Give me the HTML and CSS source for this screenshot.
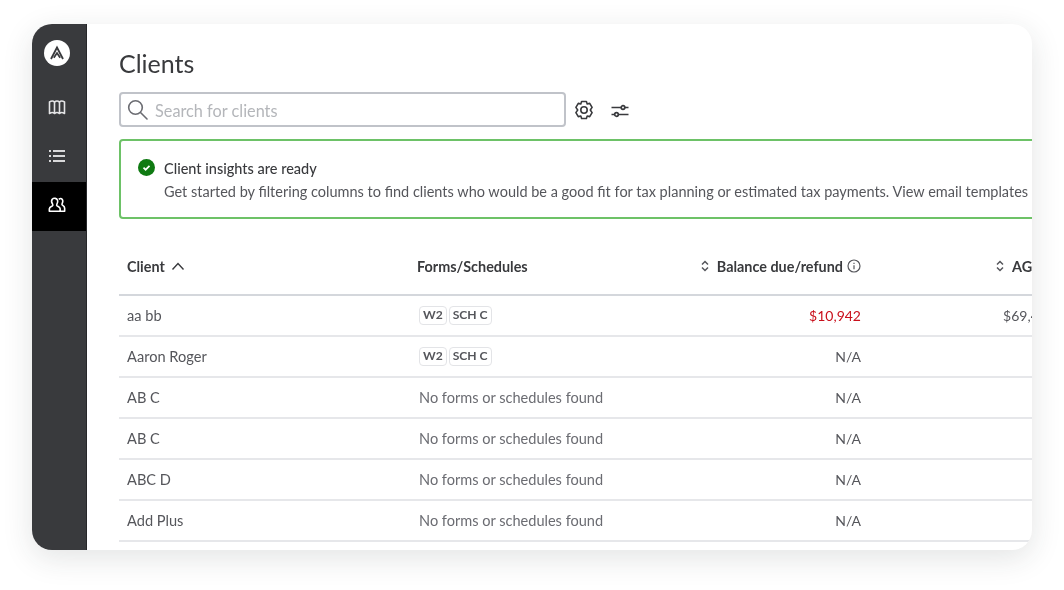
FILE: index.html
```html
<!DOCTYPE html>
<html lang="en">
<head>
<meta charset="utf-8">
<title>Clients</title>
<link rel="stylesheet" href="styles.css">
</head>
<body>
<div class="card">
  <nav class="sidebar">
    <div class="logo-wrap">
      <span class="logo">
        <svg width="18" height="18" viewBox="0 0 18 18" fill="none" stroke="#393a3d" stroke-width="1.800"><path d="M3 15 9 3.500 15 15"/><path d="M5.800 13.800 9 9l3.200 4.800"/></svg>
      </span>
    </div>
    <a class="nav-item">
      <svg width="18" height="18" viewBox="0 0 18 18" fill="none" stroke="#e4e4e6" stroke-width="1.600" stroke-linejoin="round"><path d="M1.500 4c2-1.300 3.700-1.300 5 0 1.300-1 3.700-1 5 0 1.300-1.300 3-1.300 5 0v11.500c-2-1.300-3.700-1.300-5 0-1.300-1-3.700-1-5 0-1.300-1.300-3-1.300-5 0z"/><path d="M6.500 4v11.500M11.500 4v11.500"/></svg>
    </a>
    <a class="nav-item">
      <svg width="18" height="18" viewBox="0 0 18 18" fill="none" stroke="#d8d8da" stroke-width="2"><path d="M5 4h12M5 9h12M5 14h12"/><path d="M1 4h2M1 9h2M1 14h2" stroke-width="1.800"/></svg>
    </a>
    <a class="nav-item is-active">
      <svg width="18" height="18" viewBox="0 0 20 20" fill="none" stroke="#fff" stroke-width="1.800" stroke-linejoin="round"><path d="M12 3.800c1-1 2-1.300 3-.8 1.600.8 1.800 3.300.9 5-.4.800-.6 1.300-.2 1.900.4.600 2.800 1.400 2.800 3.600v3.500H13"/><path d="M4.700 3.600c1.800-1.800 5.100-1.200 5.900 1.200.5 1.500.1 3-.7 4.200-.5.800-.4 1.400.2 1.900.8.600 3.400 1.200 3.400 3.300v2.800H1.500v-2.800c0-2.100 2.600-2.700 3.400-3.300.6-.5.700-1.100.2-1.900-1.200-1.800-1.500-3.900-.4-5.400z"/></svg>
    </a>
  </nav>
  <main class="main">
    <h1 class="title">Clients</h1>
    <div class="toolbar">
      <div class="search">
        <svg width="22" height="22" viewBox="0 0 22 22" fill="none" stroke="#6b6c72" stroke-width="1.600" stroke-linecap="round"><circle cx="8.500" cy="8.500" r="6.800"/><path d="m13.500 13.500 6.500 6.500"/></svg>
        <span class="placeholder">Search for clients</span>
      </div>
      <svg class="gear" width="22" height="22" viewBox="0 0 22 22" fill="none" stroke="#393a3d" stroke-width="1.600" stroke-linejoin="round"><path d="M8.600 2.500h4.800l.8 2.500 2.500-.6 2.400 4-1.800 2.600 1.800 2.600-2.400 4-2.500-.6-.8 2.500H8.600l-.8-2.500-2.500.6-2.400-4L4.700 11 2.900 8.400l2.400-4 2.500.6z"/><circle cx="11" cy="11" r="3.200"/></svg>
      <svg class="sliders" width="20" height="20" viewBox="0 0 20 20" fill="none" stroke="#393a3d" stroke-width="1.700"><path d="M1.500 6.500h17M1.500 13.500h17"/><circle cx="13" cy="6.500" r="1.800" fill="#fff"/><circle cx="6.500" cy="13.500" r="1.800" fill="#fff"/></svg>
    </div>
    <section class="banner">
      <svg class="check" width="17" height="17" viewBox="0 0 17 17"><circle cx="8.500" cy="8.500" r="8.500" fill="#0f7a12"/><path d="m5.500 8.700 2.100 2 3.900-3.900" fill="none" stroke="#fff" stroke-width="1.700"/></svg>
      <div class="banner-text">
        <div class="banner-title">Client insights are ready</div>
        <div class="banner-body">Get started by filtering columns to find clients who would be a good fit for tax planning or estimated tax payments. View email templates and more.</div>
      </div>
    </section>
    <div class="table">
      <div class="row head">
        <div class="client-head">Client <svg width="14" height="9" viewBox="0 0 14 9" fill="none" stroke="#393a3d" stroke-width="1.400"><path d="m1.500 7.500 5.500-6 5.500 6"/></svg></div>
        <div class="forms-head">Forms/Schedules</div>
        <div class="num-head"><svg class="sort" width="8" height="12" viewBox="0 0 8 12" fill="none" stroke="#55565b" stroke-width="1.500"><path d="m1 4.500 3-3 3 3M1 7.500l3 3 3-3"/></svg>Balance due/refund<svg class="info" width="14" height="14" viewBox="0 0 14 14" fill="none" stroke="#55565b" stroke-width="1.200"><circle cx="7" cy="7" r="6"/><path d="M7 6.200v4M7 3.800v1.200"/></svg></div>
        <div class="agi-head"><svg class="sort" width="8" height="12" viewBox="0 0 8 12" fill="none" stroke="#55565b" stroke-width="1.500"><path d="m1 4.500 3-3 3 3M1 7.500l3 3 3-3"/></svg>AGI</div>
      </div>
      <div class="row">
        <div class="name">aa bb</div>
        <div class="tags"><span class="tag">W2</span><span class="tag">SCH C</span></div>
        <div class="num due">$10,942</div>
        <div class="num">$69,400</div>
      </div>
      <div class="row">
        <div class="name">Aaron Roger</div>
        <div class="tags"><span class="tag">W2</span><span class="tag">SCH C</span></div>
        <div class="num">N/A</div>
        <div class="num"></div>
      </div>
      <div class="row"><div class="name">AB C</div><div class="muted">No forms or schedules found</div><div class="num">N/A</div><div class="num"></div></div>
      <div class="row"><div class="name">AB C</div><div class="muted">No forms or schedules found</div><div class="num">N/A</div><div class="num"></div></div>
      <div class="row"><div class="name">ABC D</div><div class="muted">No forms or schedules found</div><div class="num">N/A</div><div class="num"></div></div>
      <div class="row"><div class="name">Add Plus</div><div class="muted">No forms or schedules found</div><div class="num">N/A</div><div class="num"></div></div>
    </div>
  </main>
</div>
</body>
</html>
```
FILE: styles.css
```css
* { box-sizing: border-box; }
html, body { margin: 0; height: 100%; }
body {
  width: 1064px;
  height: 590px;
  padding: 24px 32px 40px;
  background: #fff;
  overflow: hidden;
  font-family: "Lato", "Noto Sans", sans-serif;
  color: #393a3d;
}
.card {
  display: flex;
  width: 1000px;
  height: 526px;
  border-radius: 20px;
  background: #fff;
  overflow: hidden;
  box-shadow: 0 8px 30px rgba(40, 45, 50, 0.13);
  filter: blur(0.35px);
}
.sidebar {
  flex: 0 0 55px;
  background: #393a3d;
  border-right: 1px solid #26272a;
  display: flex;
  flex-direction: column;
}
.logo-wrap { height: 60px; padding: 16px 0 0 12px; }
.logo {
  display: flex;
  align-items: center;
  justify-content: center;
  width: 26px;
  height: 26px;
  border-radius: 50%;
  background: #fff;
}
.nav-item {
  display: flex;
  align-items: center;
  justify-content: center;
  height: 49px;
  padding: 0 4px 4px 0;
}
.is-active { background: #000; }
.main {
  flex: 1;
  min-width: 0;
  padding: 0 0 0 32px;
  overflow: hidden;
}
.title {
  margin: 0;
  padding-top: 23px;
  height: 68px;
  font-size: 25px;
  line-height: 32px;
  font-weight: 400;
  color: #393a3d;
}
.toolbar {
  display: flex;
  align-items: center;
  height: 35px;
}
.search {
  display: flex;
  align-items: center;
  gap: 6px;
  width: 447px;
  height: 35px;
  padding: 1px 6px 0;
  border: 2px solid #c0c3c9;
  border-radius: 4px;
}
.placeholder { font-size: 16.300px; color: #b4b6ba; }
.gear { margin-left: 7px; }
.sliders { margin-left: 15px; margin-top: 3px; }
.banner {
  display: flex;
  width: 1000px;
  height: 80px;
  margin-top: 12px;
  padding: 16px 17px;
  gap: 9px;
  border: 2px solid #6dc267;
  border-radius: 4px;
}
.check { flex: none; margin-top: 2px; }
.banner-text { flex: none; white-space: nowrap; line-height: 24px; }
.banner-title { font-size: 14.500px; color: #393a3d; font-weight: 500; }
.banner-body { margin-top: -1px; font-size: 14.500px; color: #55565b; }
.table { width: 1000px; margin-top: 21px; font-size: 14px; }
.row {
  display: grid;
  grid-template-columns: 292px 150px 292px 194px;
  align-items: center;
  height: 40.950px;
  padding: 0 8px;
  border-bottom: 2px solid #e6e7ea;
  color: #55565b;
  white-space: nowrap;
}
.head {
  height: 56px;
  padding-bottom: 2px;
  font-weight: 700;
  font-size: 14.400px;
  color: #393a3d;
  border-bottom-color: #d4d7dc;
}
.client-head { display: flex; align-items: center; gap: 6px; }
.forms-head { margin-left: -2px; }
.num-head { display: flex; align-items: center; justify-content: flex-end; }
.agi-head { display: flex; align-items: center; padding-left: 135px; }
.sort { flex: none; margin-right: 8px; }
.info { flex: none; margin-left: 4px; }
.name { font-size: 14.600px; }
.num { text-align: right; }
.due { color: #c9101c; }
.tags { display: flex; gap: 2px; }
.tag {
  height: 19px;
  padding: 0 3px;
  border: 1.500px solid #e3e4e7;
  border-radius: 4px;
  font-size: 12.100px;
  font-weight: 700;
  line-height: 16px;
  color: #55565b;
}
.muted { font-size: 14.550px; color: #6b6c72; }
```
